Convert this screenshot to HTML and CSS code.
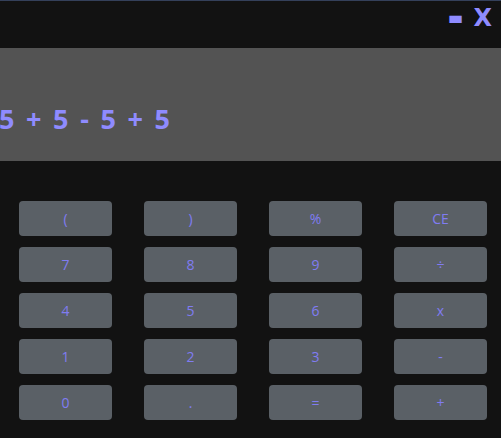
FILE: index.html
```html
<!DOCTYPE html>
<html>
<head>
<meta charset="utf-8">
<link rel="stylesheet" href="styles.css">
</head>
<body>
<div class="app">
  <div class="titlebar">
    <span class="win-btn minus">-</span>
    <span class="win-btn close">X</span>
  </div>
  <div class="display">
    <div class="expr">5 + 5 - 5 + 5</div>
  </div>
  <div class="keys">
    <button class="key">(</button>
    <button class="key">)</button>
    <button class="key">%</button>
    <button class="key">CE</button>
    <button class="key">7</button>
    <button class="key">8</button>
    <button class="key">9</button>
    <button class="key">÷</button>
    <button class="key">4</button>
    <button class="key">5</button>
    <button class="key">6</button>
    <button class="key">x</button>
    <button class="key">1</button>
    <button class="key">2</button>
    <button class="key">3</button>
    <button class="key">-</button>
    <button class="key">0</button>
    <button class="key">.</button>
    <button class="key">=</button>
    <button class="key">+</button>
  </div>
</div>
</body>
</html>
```
FILE: styles.css
```css
html, body {
  margin: 0;
  padding: 0;
  background: #121212;
  height: 100%;
  overflow: hidden;
}
.app {
  border-top: 1px solid #34405a;
  min-height: 437px;
  background: #121212;
  font-family: "Open Sans", "Noto Sans", sans-serif;
}
.titlebar {
  height: 47px;
  display: flex;
  justify-content: flex-end;
  align-items: flex-start;
  padding-right: 9px;
  gap: 11px;
  color: #8f8bff;
  font-family: "DejaVu Sans", sans-serif;
  font-weight: bold;
  font-size: 24px;
  line-height: 34px;
}
.win-btn {
  display: block;
}
.win-btn.minus {
  font-size: 32px;
  transform: scale(1.25, 1.6);
  margin-top: -2px;
}
.display {
  height: 113px;
  background: #535353;
  display: flex;
  align-items: center;
  padding-top: 28px;
  box-sizing: border-box;
}
.expr {
  color: #8f8bff;
  font-weight: bold;
  font-size: 27px;
  letter-spacing: 2.3px;
  margin-left: -1px;
}
.keys {
  display: grid;
  grid-template-columns: repeat(4, 93px);
  grid-auto-rows: 35px;
  column-gap: 32px;
  row-gap: 11px;
  padding: 40px 0 0 19px;
}
.key {
  background: #5a6066;
  border: none;
  border-radius: 4px;
  color: #807cf2;
  font-family: "Open Sans", "Noto Sans", sans-serif;
  font-size: 14px;
  padding: 0;
  margin: 0;
}
```
